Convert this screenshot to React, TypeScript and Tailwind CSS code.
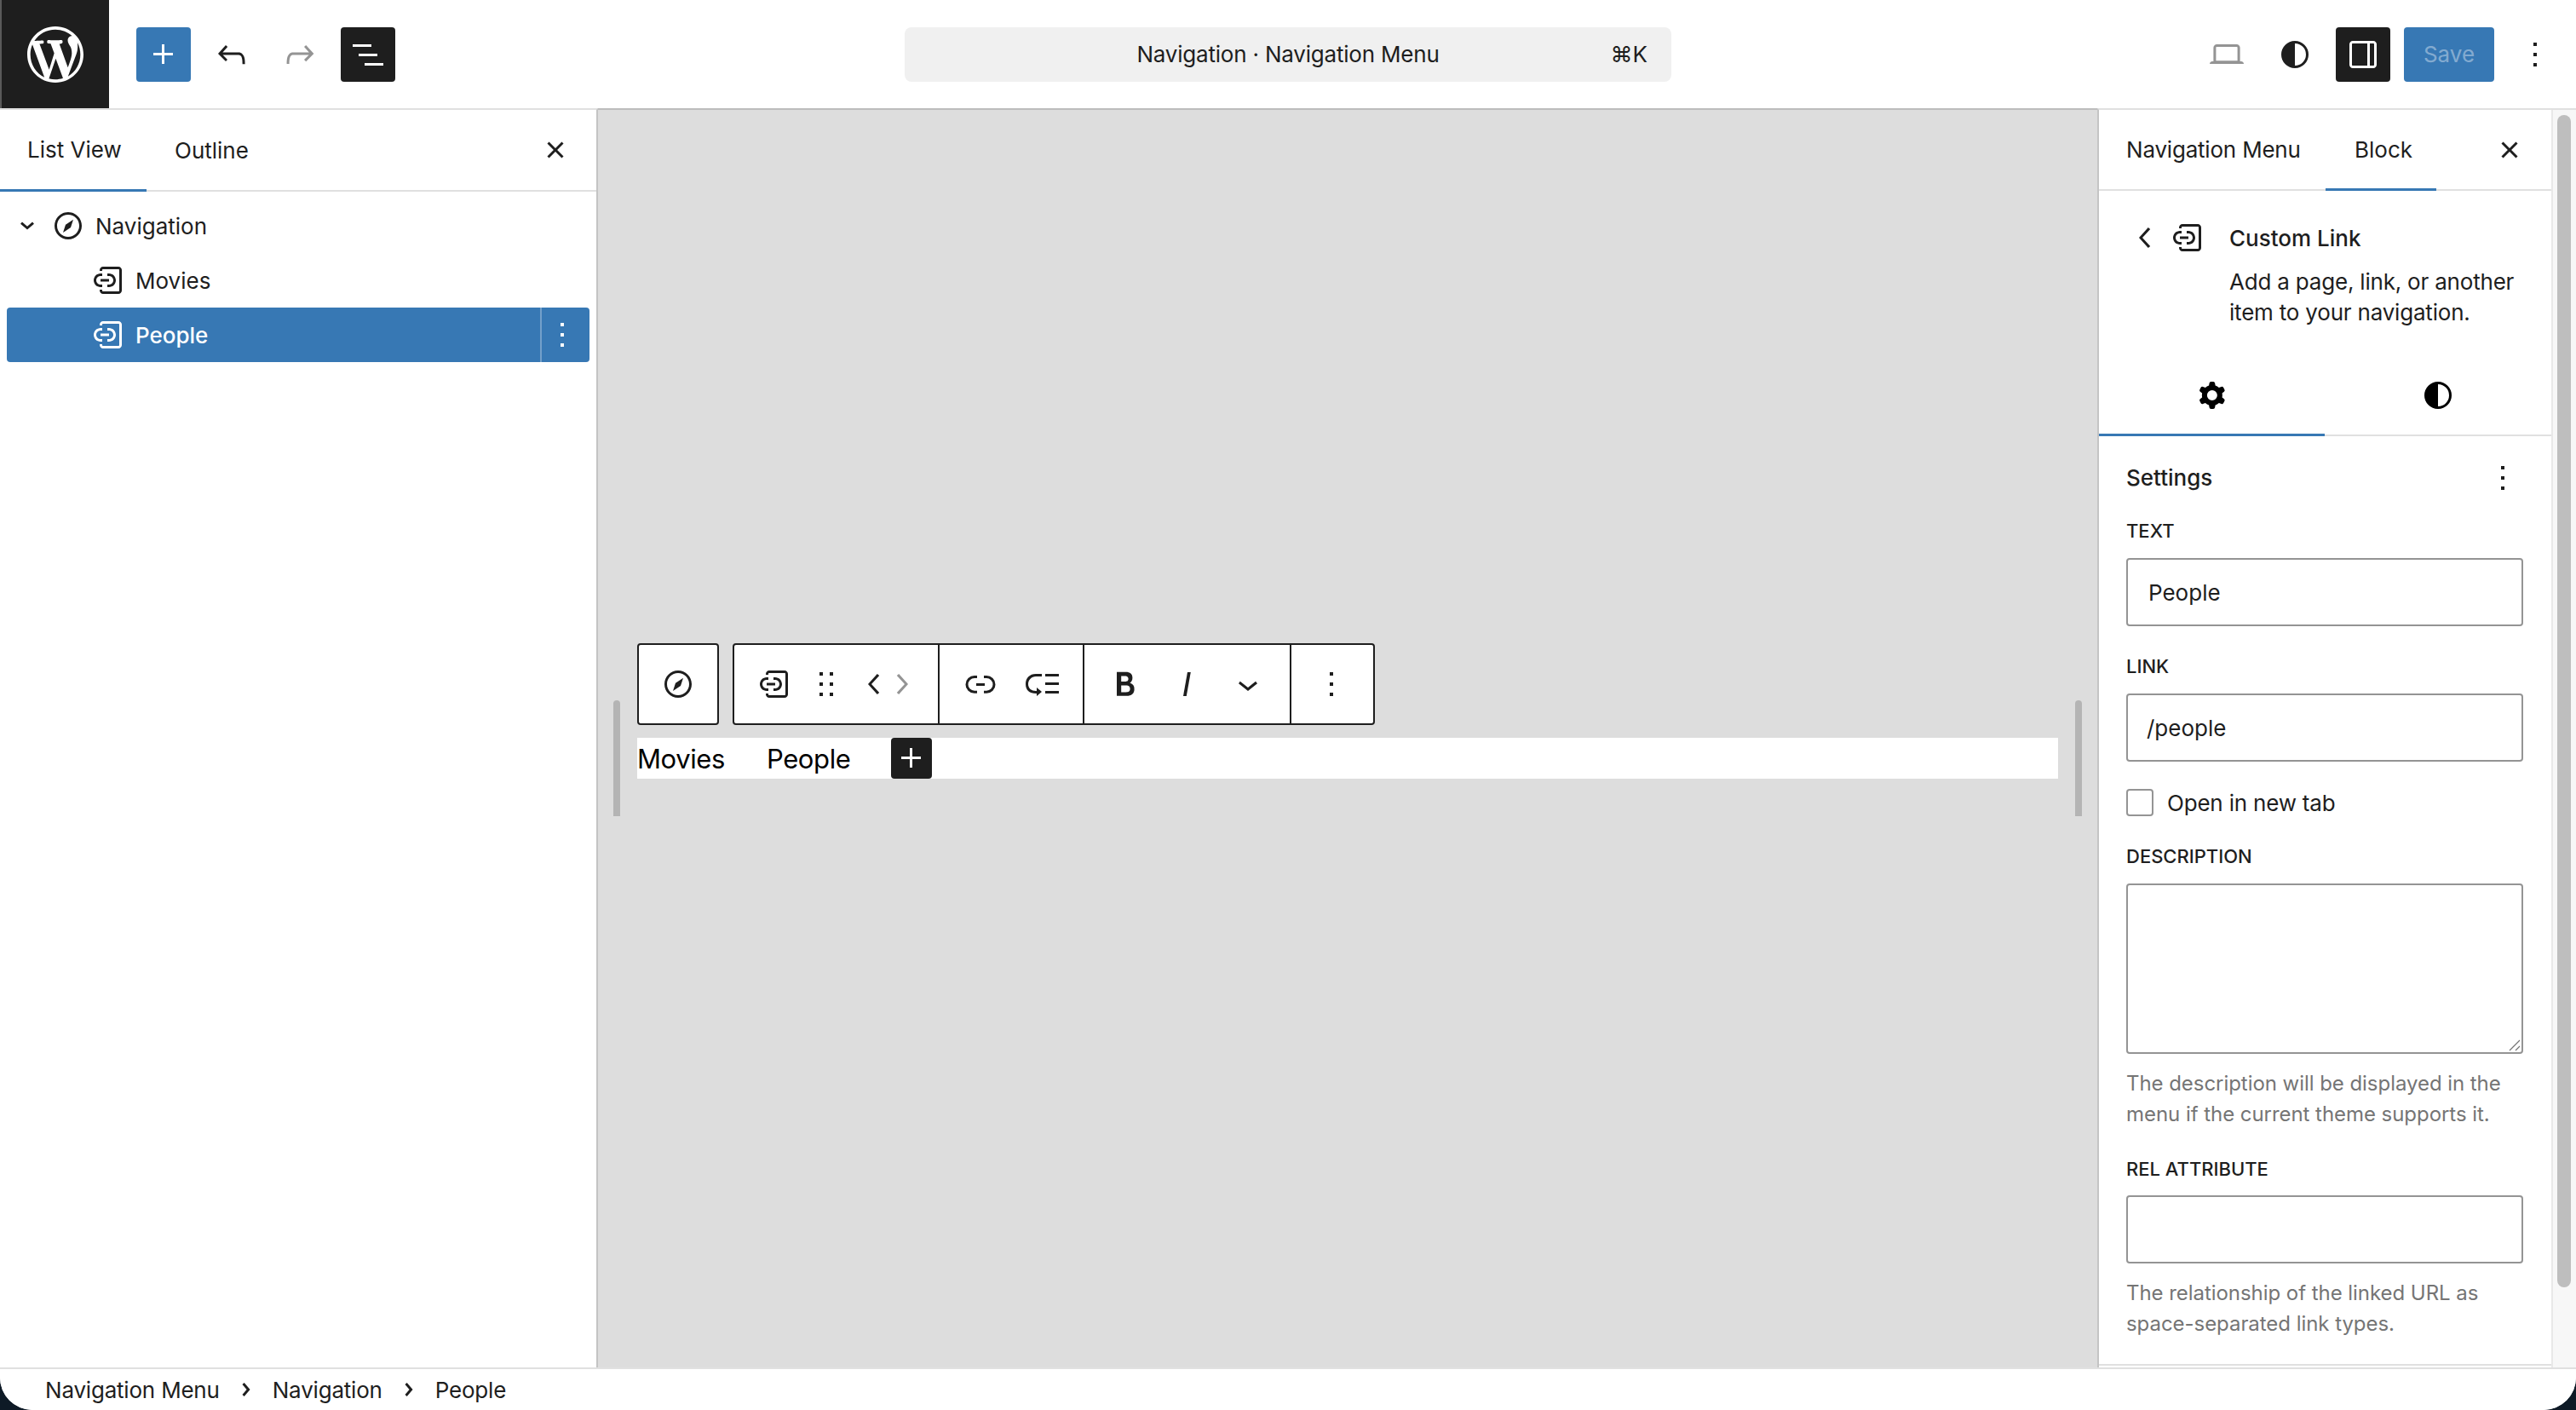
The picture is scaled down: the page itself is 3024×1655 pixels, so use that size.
import type { ReactNode } from "react";

const paths = {
  plus: "M11 12.5V17.5H12.5V12.5H17.5V11H12.5V6H11V11H6V12.5H11Z",
  undo: "M18.3 11.7c-.6-.6-1.4-.9-2.3-.9H6.7l2.9-3.3-1.1-1-4.5 5L8.5 16l1-1-2.7-2.7H16c.5 0 .9.2 1.3.5 1 1 1 3.4 1 4.5v.3h1.5v-.2c0-1.5 0-4.3-1.5-5.7z",
  redo: "M15.6 6.5l-1.1 1 2.9 3.3H8c-.9 0-1.7.3-2.3.9-1.4 1.5-1.4 4.2-1.4 5.6v.2h1.5v-.3c0-1.1 0-3.5 1-4.5.3-.3.7-.5 1.3-.5h9.2L14.5 15l1.1 1.1 4.6-4.6-4.6-5z",
  listView: "M3 6h11v1.5H3V6Zm3.5 5.5h11V13h-11v-1.5ZM21 17H10v1.5h11V17Z",
  close: "M12 13.06l3.712 3.713 1.061-1.06L13.061 12l3.712-3.712-1.06-1.06L12 10.938 8.288 7.227l-1.061 1.06L10.939 12l-3.712 3.712 1.06 1.061L12 13.061z",
  chevronDownSmall: "m15.99 10.889-3.988 3.418-3.988-3.418.976-1.14 3.012 2.582 3.012-2.581.976 1.139Z",
  chevronDown: "M17.5 11.6L12 16l-5.5-4.4.9-1.2L12 14l4.5-3.6 1 1.2z",
  chevronRightSmall: "M10.8622 8.04053L14.2805 12.0286L10.8622 16.0167L9.72327 15.0405L12.3049 12.0286L9.72327 9.01672L10.8622 8.04053Z",
  chevronLeft: "M14.6 7l-1.2-1L8 12l5.4 6 1.2-1-4.6-5z",
  chevronRight: "M10.6 6L9.4 7l4.6 5-4.6 5 1.2 1 5.4-6z",
  more: "M13 19h-2v-2h2v2zm0-6h-2v-2h2v2zm0-6h-2V5h2v2z",
  laptop: "M20.5 16h-.7V8c0-1.1-.9-2-2-2H6.2c-1.1 0-2 .9-2 2v8h-.7c-.8 0-1.5.7-1.5 1.5h20c0-.8-.7-1.5-1.5-1.5zM5.7 8c0-.3.2-.5.5-.5h11.6c.3 0 .5.2.5.5v7.6H5.7V8z",
  contrast: "M12 4a8 8 0 1 0 0 16a8 8 0 0 0 0-16zm0 14.5v-13a6.5 6.5 0 0 1 0 13z",
  drawer: "M18 4H6c-1.1 0-2 .9-2 2v12c0 1.1.9 2 2 2h12c1.1 0 2-.9 2-2V6c0-1.1-.9-2-2-2zM5.5 6c0-.3.2-.5.5-.5h8.5v13H6c-.3 0-.5-.2-.5-.5V6zM18.5 18c0 .3-.2.5-.5.5h-2v-13h2c.3 0 .5.2.5.5v12z",
  cog: "M10.289 4.836A1 1 0 0 1 11.275 4h1.306a1 1 0 0 1 .987.836l.244 1.466c.787.26 1.503.679 2.108 1.218l1.393-.522a1 1 0 0 1 1.216.437l.653 1.13a1 1 0 0 1-.23 1.273l-1.148.944a6.025 6.025 0 0 1 0 2.435l1.149.946a1 1 0 0 1 .23 1.272l-.653 1.13a1 1 0 0 1-1.216.437l-1.394-.522c-.605.54-1.32.958-2.108 1.218l-.244 1.466a1 1 0 0 1-.987.836h-1.306a1 1 0 0 1-.986-.836l-.244-1.466a5.995 5.995 0 0 1-2.108-1.218l-1.394.522a1 1 0 0 1-1.217-.436l-.653-1.131a1 1 0 0 1 .23-1.272l1.149-.946a6.026 6.026 0 0 1 0-2.435l-1.148-.944a1 1 0 0 1-.23-1.272l.653-1.131a1 1 0 0 1 1.217-.437l1.393.522a5.994 5.994 0 0 1 2.108-1.218l.244-1.466ZM14.929 12a3 3 0 1 1-6 0 3 3 0 0 1 6 0Z",
  customLink: "M12.5 14.5h-1V16h1c2.2 0 4-1.8 4-4s-1.8-4-4-4h-1v1.5h1c1.4 0 2.5 1.1 2.5 2.5s-1.1 2.5-2.5 2.5zm-4 1.5v-1.5h-1C6.1 14.5 5 13.4 5 12s1.1-2.5 2.5-2.5h1V8h-1c-2.2 0-4 1.8-4 4s1.8 4 4 4h1zm-1-3.2h5v-1.5h-5v1.5zM18 4H9c-1.1 0-2 .9-2 2v.5h1.5V6c0-.3.2-.5.5-.5h9c.3 0 .5.2.5.5v12c0 .3-.2.5-.5.5H9c-.3 0-.5-.2-.5-.5v-.5H7v.5c0 1.1.9 2 2 2h9c1.1 0 2-.9 2-2V6c0-1.1-.9-2-2-2z",
  compass: "M12 4c-4.4 0-8 3.6-8 8s3.6 8 8 8 8-3.6 8-8-3.6-8-8-8zm0 14.5c-3.6 0-6.5-2.9-6.5-6.5S8.4 5.5 12 5.5s6.5 2.9 6.5 6.5-2.9 6.5-6.5 6.5zM9 16l4.5-3L15 8.4l-4.5 3L9 16z",
  drag: "M8 7h2V5H8v2zm0 6h2v-2H8v2zm0 6h2v-2H8v2zm6-14v2h2V5h-2zm0 8h2v-2h-2v2zm0 6h2v-2h-2v2z",
  link: "M10 17.389H8.444A5.194 5.194 0 1 1 8.444 7H10v1.5H8.444a3.694 3.694 0 0 0 0 7.389H10v1.5ZM14 7h1.556a5.194 5.194 0 0 1 0 10.39H14v-1.5h1.556a3.694 3.694 0 0 0 0-7.39H14V7Zm-4.5 6h5v-1.5h-5V13Z",
  submenu: "M2 12c0 3.6 2.4 5.5 6 5.5h.5V19l3-2.5-3-2.5v2H8c-2.5 0-4.5-1.5-4.5-4s2-4.5 4.5-4.5h3.5V6H8c-3.6 0-6 2.4-6 6zm19.5-1h-8v1.5h8V11zm0 5h-8v1.5h8V16zm0-10h-8v1.5h8V6z",
  bold: "M14.7 11.3c1-.6 1.5-1.6 1.5-3 0-2.3-1.3-3.4-4-3.4H7v14h5.8c1.4 0 2.5-.3 3.3-1 .8-.7 1.2-1.7 1.2-2.9.1-1.9-.8-3.1-2.6-3.7zm-5.1-4h2.3c.6 0 1.1.1 1.4.4.3.3.5.7.5 1.2s-.2 1-.5 1.2c-.3.3-.8.4-1.4.4H9.6V7.3zm4.6 9c-.4.3-1 .4-1.7.4H9.6v-3.9h2.9c.7 0 1.3.2 1.7.5.4.3.6.8.6 1.5s-.2 1.2-.6 1.5z",
  italic: "M12.5 5L10 19h1.9l2.5-14z",
};

function Icon({ name, className = "" }: { name: keyof typeof paths; className?: string }) {
  return (
    <svg viewBox="0 0 24 24" width={48} height={48} fill="currentColor" fillRule="evenodd" className={`shrink-0 ${className}`}>
      <path d={paths[name]} />
    </svg>
  );
}

function WpLogo() {
  return (
    <svg viewBox="0 0 20 20" width={66} height={66} fill="#fff">
      <path d="M20 10c0-5.51-4.49-10-10-10C4.48 0 0 4.49 0 10c0 5.52 4.48 10 10 10 5.51 0 10-4.48 10-10zM7.78 15.37L4.37 6.22c.55-.02 1.17-.08 1.17-.08.5-.06.44-1.13-.06-1.11 0 0-1.45.11-2.37.11-.18 0-.37 0-.58-.01C4.12 2.69 6.87 1.11 10 1.11c2.33 0 4.45.87 6.05 2.34-.68-.11-1.65.39-1.65 1.58 0 .74.45 1.36.9 2.1.35.61.55 1.36.55 2.46 0 1.49-1.4 5-1.4 5l-3.03-8.37c.54-.02.82-.17.82-.17.5-.05.44-1.25-.06-1.22 0 0-1.44.12-2.38.12-.87 0-2.33-.12-2.33-.12-.5-.03-.56 1.2-.06 1.22l.92.08 1.26 3.41zM17.41 10c.24-.64.74-1.87.43-4.25.7 1.29 1.05 2.71 1.05 4.25 0 3.29-1.73 6.24-4.4 7.78.97-2.59 1.94-5.2 2.92-7.78zM6.1 18.09C3.12 16.65 1.11 13.53 1.11 10c0-1.3.23-2.48.72-3.59C3.25 10.3 4.67 14.2 6.1 18.09zm4.03-6.63l2.58 6.98c-.86.29-1.76.45-2.71.45-.79 0-1.57-.11-2.29-.33.81-2.38 1.62-4.74 2.42-7.1z" />
    </svg>
  );
}

function Slot({ className, children }: { className: string; children: ReactNode }) {
  return <span className={`flex h-[64px] shrink-0 items-center justify-center ${className}`}>{children}</span>;
}

function Label({ className = "", children }: { className?: string; children: ReactNode }) {
  return <div className={`h-[32px] text-[22px] leading-[32px] font-medium uppercase ${className}`}>{children}</div>;
}

function TextField({ value = "", className = "pl-6" }: { value?: string; className?: string }) {
  return <input readOnly value={value} className={`mt-4 block h-[80px] w-[466px] rounded-[4px] border-2 border-[#949494] bg-white text-[26px] text-[#1e1e1e] outline-none ${className}`} />;
}

function Header() {
  return (
    <header className="flex h-[127px] shrink-0 items-center bg-white">
      <div className="flex h-[127px] w-[128px] items-center justify-center border-l-2 border-[#5a5a5a] bg-[#1e1e1e]">
        <WpLogo />
      </div>
      <div className="ml-8 flex items-center gap-4">
        <Slot className="w-[64px] rounded-[4px] bg-[#3778b4] text-white"><Icon name="plus" /></Slot>
        <Slot className="w-[64px]"><Icon name="undo" /></Slot>
        <Slot className="w-[64px] text-[#949494]"><Icon name="redo" /></Slot>
        <Slot className="w-[64px] rounded-[4px] bg-[#1e1e1e] text-white"><Icon name="listView" /></Slot>
      </div>
      <div className="ml-[598px] flex h-[64px] w-[900px] items-center rounded-[8px] bg-[#f0f0f0] pr-7 pl-[72px] text-[26px]">
        <span className="flex-1 text-center tracking-[-0.2px]">Navigation · Navigation Menu</span>
        <span className="w-[44px] text-right">⌘K</span>
      </div>
      <div className="ml-auto flex items-center gap-4 pr-4">
        <Slot className="w-[64px] text-[#949494]"><Icon name="laptop" /></Slot>
        <Slot className="w-[64px]"><Icon name="contrast" /></Slot>
        <Slot className="w-[64px] rounded-[4px] bg-[#1e1e1e] text-white"><Icon name="drawer" /></Slot>
        <Slot className="w-[106px] rounded-[4px] bg-[#3778b4] text-[26px] text-white/40">Save</Slot>
        <Slot className="w-[64px]"><Icon name="more" /></Slot>
      </div>
    </header>
  );
}

function ListPanel() {
  return (
    <aside className="w-[702px] shrink-0 border-t-2 border-r-2 border-t-[#e0e0e0] border-r-[#c4c4c4] bg-white">
      <div className="flex h-[96px] items-start border-b-2 border-[#e0e0e0]">
        <div className="flex h-[96px] w-[172px] items-center border-b-[3px] border-[#3778b4] pl-[32px] text-[26px]">List View</div>
        <div className="flex h-[94px] items-center pl-[33px] text-[26px]">Outline</div>
        <span className="ml-auto flex h-[94px] items-center pr-6"><Icon name="close" /></span>
      </div>
      <div className="px-2 pt-2 text-[26px]">
        <div className="flex h-[64px] items-center gap-2">
          <span className="flex items-center"><Icon name="chevronDownSmall" /><Icon name="compass" /></span>
          Navigation
        </div>
        <div className="flex h-[64px] items-center gap-2 pl-[95px]">
          <Icon name="customLink" />
          Movies
        </div>
        <div className="flex h-[64px] items-center rounded-[4px] bg-[#3778b4] pl-[95px] text-white">
          <Icon name="customLink" />
          <span className="ml-2 font-medium">People</span>
          <span className="ml-auto flex h-full w-[58px] items-center border-l-2 border-white/30"><Icon name="more" /></span>
        </div>
      </div>
    </aside>
  );
}

function BlockToolbar() {
  return (
    <div className="flex h-[96px] gap-4 text-[#1e1e1e]">
      <div className="flex w-[96px] items-center justify-center rounded-[4px] border-2 border-[#1e1e1e] bg-white">
        <Icon name="compass" />
      </div>
      <div className="flex w-[754px] rounded-[4px] border-2 border-[#1e1e1e] bg-white">
        <div className="flex w-[241px] items-center border-r-2 border-[#1e1e1e] pl-[15px]">
          <Slot className="w-[64px]"><Icon name="customLink" /></Slot>
          <Slot className="w-[57px]"><Icon name="drag" /></Slot>
          <Slot className="ml-[14px] w-[30px]"><Icon name="chevronLeft" /></Slot>
          <Slot className="w-[32px] text-[#949494]"><Icon name="chevronRight" /></Slot>
        </div>
        <div className="flex w-[170px] items-center border-r-2 border-[#1e1e1e] pl-4">
          <Slot className="w-[64px]"><Icon name="link" /></Slot>
          <Slot className="ml-[9px] w-[64px]"><Icon name="submenu" /></Slot>
        </div>
        <div className="flex w-[243px] items-center gap-2 border-r-2 border-[#1e1e1e] pl-4">
          <Slot className="w-[64px]"><Icon name="bold" /></Slot>
          <Slot className="w-[64px]"><Icon name="italic" /></Slot>
          <Slot className="w-[64px]"><Icon name="chevronDown" /></Slot>
        </div>
        <div className="flex flex-1 items-center justify-center pr-[2px]">
          <Icon name="more" />
        </div>
      </div>
    </div>
  );
}

function Canvas() {
  return (
    <main className="relative min-w-0 flex-1 border-t-2 border-[#bdbdbd] bg-[#dddddd] px-[46px] pt-[626px]">
      <BlockToolbar />
      <div className="mt-[15px] flex h-[48px] items-center bg-white text-[31px] tracking-[-0.4px] text-black">
        <span className="pt-[3px]">Movies</span>
        <span className="ml-[49px] pt-[3px]">People</span>
        <span className="ml-[48px] flex h-[48px] w-[48px] items-center justify-center rounded-[4px] bg-[#1e1e1e] text-white"><Icon name="plus" /></span>
      </div>
      <span className="absolute top-[693px] left-[18px] h-[136px] w-[8px] rounded-t-full bg-[#b4b4b4]" />
      <span className="absolute top-[693px] right-[18px] h-[136px] w-[8px] rounded-t-full bg-[#b4b4b4]" />
    </main>
  );
}

function Inspector() {
  return (
    <aside className="flex w-[562px] shrink-0 border-t-2 border-l-2 border-t-[#e0e0e0] border-l-[#c4c4c4] bg-white">
      <div className="h-[1474px] w-[531px] shrink-0 border-b-2 border-[#e0e0e0]">
        <div className="flex h-[95px] items-start border-b-2 border-[#e0e0e0] text-[26px]">
          <div className="flex h-[93px] w-[266px] items-center pl-[32px] tracking-[-0.2px]">Navigation Menu</div>
          <div className="flex h-[95px] w-[130px] items-center border-b-[3px] border-[#3778b4] pl-[34px]">Block</div>
          <span className="ml-auto flex h-[93px] items-center pr-[25px]"><Icon name="close" /></span>
        </div>

        <div className="flex pt-[31px] pl-[31px] text-[26px]">
          <Icon name="chevronLeft" />
          <Icon name="customLink" className="ml-px" />
          <div className="ml-[25px]">
            <div className="flex h-[48px] items-center font-medium">Custom Link</div>
            <p className="mt-[10px] w-[340px] leading-[36px] tracking-[-0.2px]">Add a page, link, or another item to your navigation.</p>
          </div>
        </div>

        <div className="mt-[31px] flex h-[96px] items-start border-b-2 border-[#e0e0e0] text-black">
          <div className="flex h-[96px] w-[265px] items-center justify-center border-b-[3px] border-[#3778b4] pt-[2px]"><Icon name="cog" /></div>
          <div className="flex h-[94px] flex-1 items-center justify-center pt-[2px]"><Icon name="contrast" /></div>
        </div>

        <section className="pt-[25px] pl-[32px]">
          <div className="flex h-[48px] items-center justify-between pr-[33px] text-[26px] font-medium">
            <span className="pb-[2px]">Settings</span>
            <Icon name="more" />
          </div>
          <Label className="mt-[22px]">Text</Label>
          <TextField value="People" />
          <Label className="mt-[31px]">Link</Label>
          <TextField value="/people" className="pl-[22px]" />
          <div className="mt-8 flex h-[32px] items-center gap-4 text-[26px] tracking-[-0.2px]">
            <span className="h-[32px] w-[32px] rounded-[4px] border-2 border-[#949494] bg-white" />
            Open in new tab
          </div>
          <Label className="mt-[31px]">Description</Label>
          <div className="relative mt-4 w-[466px]">
            <textarea readOnly className="block h-[200px] w-[466px] resize-none rounded-[4px] border-2 border-[#949494] bg-white outline-none" />
            <svg viewBox="0 0 14 14" width={14} height={14} stroke="#757575" strokeWidth={1.2} className="absolute right-[3px] bottom-[3px]">
              <path d="M1 13 13 1M8 13l5-5" />
            </svg>
          </div>
          <p className="mt-[17px] w-[466px] text-[24px] leading-[36px] tracking-[-0.05px] text-[#757575]">The description will be displayed in the menu if the current theme supports it.</p>
          <Label className="mt-[30px]">Rel attribute</Label>
          <input readOnly className="mt-[15px] block h-[80px] w-[466px] rounded-[4px] border-2 border-[#949494] bg-white outline-none" />
          <p className="mt-[17px] w-[466px] text-[24px] leading-[36px] tracking-[-0.05px] text-[#757575]">The relationship of the linked URL as space-separated link types.</p>
        </section>
      </div>
      <div className="flex-1 border-l-2 border-[#e8e8e8] bg-[#f7f7f7] pt-[6px] pl-[5px]">
        <div className="h-[1376px] w-[16px] rounded-full bg-[#bebebe]" />
      </div>
    </aside>
  );
}

function Breadcrumbs() {
  return (
    <footer className="flex h-[50px] shrink-0 items-center border-t-2 border-[#e0e0e0] bg-white pl-[53px] text-[26px] tracking-[-0.2px]">
      Navigation Menu
      <Icon name="chevronRightSmall" className="mx-[7px]" />
      Navigation
      <Icon name="chevronRightSmall" className="mx-[7px]" />
      People
    </footer>
  );
}

export default function App() {
  return (
    <div className="h-[1655px] w-[3024px] overflow-hidden bg-[#0e1a26] [font-family:Inter,sans-serif] text-[#1e1e1e]">
      <div className="flex h-full flex-col overflow-hidden rounded-b-[38px] bg-white">
        <Header />
        <div className="flex h-[1478px] shrink-0">
          <ListPanel />
          <Canvas />
          <Inspector />
        </div>
        <Breadcrumbs />
      </div>
    </div>
  );
}
